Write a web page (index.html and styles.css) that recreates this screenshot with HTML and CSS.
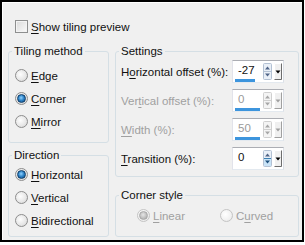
FILE: index.html
```html
<!DOCTYPE html>
<html lang="en">
<head>
  <meta charset="UTF-8" />
  <title>Tiling</title>
  <link rel="stylesheet" href="styles.css">
</head>
<body>

  <div class="dialog">
    <div class="check"><span class="box"></span><span><u>S</u>how tiling preview</span></div>

    <div class="cols">
      <div class="col-left">
        <fieldset class="group tiling">
          <legend>Tiling method</legend>
          <div class="radio"><span class="dot"></span><span><u>E</u>dge</span></div>
          <div class="radio on"><span class="dot"></span><span><u>C</u>orner</span></div>
          <div class="radio"><span class="dot"></span><span><u>M</u>irror</span></div>
        </fieldset>

        <fieldset class="group direction">
          <legend>Direction</legend>
          <div class="radio on"><span class="dot"></span><span><u>H</u>orizontal</span></div>
          <div class="radio"><span class="dot"></span><span><u>V</u>ertical</span></div>
          <div class="radio"><span class="dot"></span><span><u>B</u>idirectional</span></div>
        </fieldset>
      </div>

      <div class="col-right">
        <fieldset class="group settings">
          <legend>Settings</legend>

          <div class="row">
            <span class="lbl">H<u>o</u>rizontal offset (%):</span>
            <div class="spin">
              <div class="field"><span class="val">-27</span><span class="bar" style="width: 20px"></span></div>
              <svg class="arrows" width="9" height="17" viewBox="0 0 9 17">
                <rect x="0.5" y="0.5" width="8" height="16" rx="1" fill="#e9eff7" stroke="#b3c1d3"/>
                <line x1="1" y1="8.5" x2="8" y2="8.5" stroke="#b3c1d3"/>
                <path d="M2 6.5 L4.5 3.5 L7 6.5Z" fill="#4f6488"/>
                <path d="M2 10.5 L4.5 13.5 L7 10.5Z" fill="#4f6488"/>
              </svg>
              <svg class="drop" width="8" height="17" viewBox="0 0 8 17">
                <rect width="8" height="17" fill="#f0f0f0"/>
                <path d="M0.5 16.5V0.5H7.5" stroke="#fff" fill="none"/>
                <path d="M0.5 16.5H7.5V0.5" stroke="#6d6d6d" fill="none"/>
                <path d="M1.5 7.5H6.5L4 10.5Z" fill="#000"/>
              </svg>
            </div>
          </div>

          <div class="row off">
            <span class="lbl">Ver<u>t</u>ical offset (%):</span>
            <div class="spin">
              <div class="field"><span class="val">0</span><span class="bar" style="width: 25px"></span></div>
              <svg class="arrows" width="9" height="17" viewBox="0 0 9 17">
                <rect x="0.5" y="0.5" width="8" height="16" rx="1" fill="#f4f4f4" stroke="#cfcfcf"/>
                <line x1="1" y1="8.5" x2="8" y2="8.5" stroke="#cfcfcf"/>
                <path d="M2 6.5 L4.5 3.5 L7 6.5Z" fill="#a6a6a6"/>
                <path d="M2 10.5 L4.5 13.5 L7 10.5Z" fill="#a6a6a6"/>
              </svg>
              <svg class="drop" width="8" height="17" viewBox="0 0 8 17">
                <rect width="8" height="17" fill="#f0f0f0"/>
                <path d="M0.5 16.5V0.5H7.5" stroke="#fff" fill="none"/>
                <path d="M0.5 16.5H7.5V0.5" stroke="#a0a0a0" fill="none"/>
                <path d="M1.5 7.5H6.5L4 10.5Z" fill="#a0a0a0"/>
              </svg>
            </div>
          </div>

          <div class="row off">
            <span class="lbl"><u>W</u>idth (%):</span>
            <div class="spin">
              <div class="field"><span class="val">50</span><span class="bar" style="width: 25px"></span></div>
              <svg class="arrows" width="9" height="17" viewBox="0 0 9 17">
                <rect x="0.5" y="0.5" width="8" height="16" rx="1" fill="#f4f4f4" stroke="#cfcfcf"/>
                <line x1="1" y1="8.5" x2="8" y2="8.5" stroke="#cfcfcf"/>
                <path d="M2 6.5 L4.5 3.5 L7 6.5Z" fill="#a6a6a6"/>
                <path d="M2 10.5 L4.5 13.5 L7 10.5Z" fill="#a6a6a6"/>
              </svg>
              <svg class="drop" width="8" height="17" viewBox="0 0 8 17">
                <rect width="8" height="17" fill="#f0f0f0"/>
                <path d="M0.5 16.5V0.5H7.5" stroke="#fff" fill="none"/>
                <path d="M0.5 16.5H7.5V0.5" stroke="#a0a0a0" fill="none"/>
                <path d="M1.5 7.5H6.5L4 10.5Z" fill="#a0a0a0"/>
              </svg>
            </div>
          </div>

          <div class="row">
            <span class="lbl"><u>T</u>ransition (%):</span>
            <div class="spin">
              <div class="field"><span class="val">0</span><span class="bar" style="width: 0"></span></div>
              <svg class="arrows" width="9" height="17" viewBox="0 0 9 17">
                <rect x="0.5" y="0.5" width="8" height="16" rx="1" fill="#e9eff7" stroke="#b3c1d3"/>
                <rect x="1" y="9" width="7" height="7" fill="#c9e3f7"/>
                <line x1="1" y1="8.5" x2="8" y2="8.5" stroke="#3c7fb1"/>
                <path d="M2 6.5 L4.5 3.5 L7 6.5Z" fill="#4f6488"/>
                <path d="M2 10.5 L4.5 13.5 L7 10.5Z" fill="#1d4f7c"/>
              </svg>
              <svg class="drop" width="8" height="17" viewBox="0 0 8 17">
                <rect width="8" height="17" fill="#f0f0f0"/>
                <path d="M0.5 16.5V0.5H7.5" stroke="#fff" fill="none"/>
                <path d="M0.5 16.5H7.5V0.5" stroke="#6d6d6d" fill="none"/>
                <path d="M1.5 7.5H6.5L4 10.5Z" fill="#000"/>
              </svg>
            </div>
          </div>
        </fieldset>

        <fieldset class="group corner">
          <legend>Corner style</legend>
          <div class="pair">
            <div class="radio dim on"><span class="dot"></span><span><u>L</u>inear</span></div>
            <div class="radio dim"><span class="dot"></span><span>C<u>u</u>rved</span></div>
          </div>
        </fieldset>
      </div>
    </div>
  </div>

</body>
</html>
```

FILE: styles.css
```css
* { box-sizing: border-box; }
body {
  margin: 0;
  background: #fff;
  font-family: 'Liberation Sans', Arial, sans-serif;
  font-size: 11.5px;
  color: #111;
}

.dialog {
  width: 304px;
  height: 242px;
  border: 2px solid #000;
  background: #f0f0f0;
  box-shadow: inset 1px 1px 0 #fff;
  padding: 17px 3px 0 6px;
}

u { text-decoration-thickness: 1px; text-underline-offset: 2px; }

/* checkbox */
.check {
  display: flex;
  align-items: center;
  gap: 3px;
  height: 15px;
  padding-left: 7px;
  white-space: nowrap;
}
.box {
  width: 13px;
  height: 13px;
  border: 1px solid #8e8f8f;
  background: linear-gradient(135deg, #d9d9d9, #fafafa);
  box-shadow: inset 0 0 0 1px #f3f3f3;
}

.cols {
  display: flex;
  gap: 6px;
  margin-top: 10px;
}
.col-left { width: 101px; }
.col-right { width: 184px; }

/* group boxes */
.group {
  margin: 0;
  padding: 0;
  min-width: 0;
  border: 1px solid #d5dfe5;
  border-radius: 3px;
}
.group legend {
  margin-left: 3px;
  padding: 0 2px;
  line-height: 14px;
}

.tiling { padding: 6px 0 9px 0; }
.direction { margin-top: 5px; padding: 1px 0 4px 0; }
.settings { padding: 2px 0 6px 0; }
.corner { margin-top: 11px; padding: 2px 0 9px 0; }

/* radios */
.radio {
  display: flex;
  align-items: center;
  gap: 3px;
  height: 23px;
  margin-left: 6px;
  white-space: nowrap;
}
.dot {
  width: 13px;
  height: 13px;
  flex-shrink: 0;
  border-radius: 50%;
  border: 1px solid #8d8d8d;
  background: radial-gradient(circle at 40% 40%, #fdfdfd 0, #e6e6e6 60%, #cdcdcd 100%);
  display: flex;
  align-items: center;
  justify-content: center;
}
.radio.on .dot::after {
  content: "";
  width: 7px;
  height: 7px;
  border-radius: 50%;
  border: 1px solid #0e3d68;
  background: radial-gradient(circle at 45% 40%, #8ed2ff 0, #2a7fc4 50%, #134e85 100%);
}
.radio.dim { color: #a0a0a0; }
.radio.dim .dot {
  border-color: #c4c4c4;
  background: radial-gradient(circle at 40% 40%, #fff 0, #f1f1f1 60%, #e2e2e2 100%);
}
.radio.dim.on .dot::after {
  border-color: #a8a8a8;
  background: radial-gradient(circle at 45% 40%, #e6e6e6 0, #bdbdbd 60%, #a5a5a5 100%);
}

.pair {
  display: flex;
  padding-left: 15px;
}
.pair .radio:first-child { width: 77px; }

/* settings rows */
.row {
  display: grid;
  grid-template-columns: 111px 52px;
  align-items: center;
  height: 23px;
  margin: 0 0 6px 5px;
  white-space: nowrap;
}
.row:last-child { margin-bottom: 0; }
.row.off .lbl { color: #a0a0a0; }
.row.off .val { color: #9a9a9a; }

.spin {
  display: flex;
  align-items: center;
  width: 52px;
  height: 23px;
  background: #fff;
  border: 1px solid;
  border-color: #abadb3 #dbdfe6 #e3e9ef #e2e3ea;
  padding-right: 1px;
}
.field {
  flex: 1;
  display: flex;
  flex-direction: column;
  align-self: stretch;
  padding-top: 2px;
}
.val {
  line-height: 14px;
  padding-left: 5px;
}
.bar {
  height: 3px;
  margin: 2px 0 0 2px;
  background: #3d95dd;
}
.arrows { margin-right: 2px; }
```
